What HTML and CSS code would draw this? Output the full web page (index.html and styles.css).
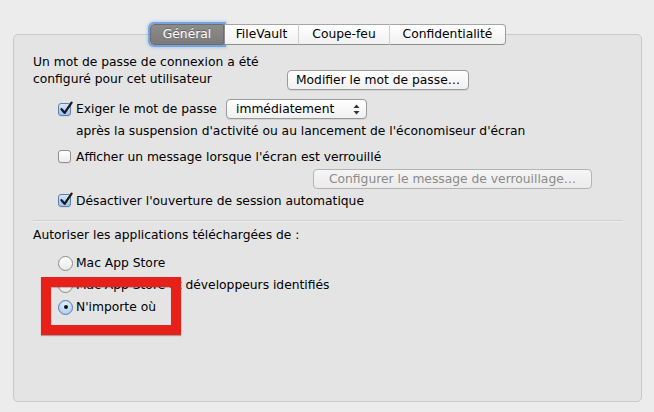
FILE: index.html
```html
<!DOCTYPE html>
<html lang="fr">
<head>
<meta charset="utf-8">
<title>Sécurité et confidentialité</title>
<link rel="stylesheet" href="styles.css">
</head>
<body>
<div class="window">
  <div class="tabs">
    <div class="tab tab-general selected">Général</div>
    <div class="tab tab-filevault">FileVault</div>
    <div class="tab tab-coupefeu">Coupe-feu</div>
    <div class="tab tab-confid">Confidentialité</div>
  </div>
  <div class="panel">
    <div class="row-password">
      <div class="pw-text">Un mot de passe de connexion a été<br>configuré pour cet utilisateur</div>
      <div class="button btn-modify">Modifier le mot de passe…</div>
    </div>
    <div class="row-require">
      <span class="checkbox checked"><svg viewBox="0 0 16 16" width="16" height="16"><path d="M3.5 8.2 L6.6 11.8 L13.6 1.6" fill="none" stroke="#1a1a1a" stroke-width="2.3" stroke-linecap="round" stroke-linejoin="round"/></svg></span>
      <span class="label">Exiger le mot de passe</span>
      <div class="select">immédiatement<svg class="arrows" viewBox="0 0 7 11" width="7" height="11"><path d="M3.5 0.5 L6.5 4 H0.5Z M3.5 10.5 L6.5 7 H0.5Z" fill="#333"/></svg></div>
    </div>
    <div class="row-after">après la suspension d'activité ou au lancement de l'économiseur d'écran</div>
    <div class="row-check row-afficher">
      <span class="checkbox"></span>
      <span class="label">Afficher un message lorsque l'écran est verrouillé</span>
    </div>
    <div class="row-config">
      <div class="button disabled btn-config">Configurer le message de verrouillage…</div>
    </div>
    <div class="row-check row-desactiver">
      <span class="checkbox checked"><svg viewBox="0 0 16 16" width="16" height="16"><path d="M3.5 8.2 L6.6 11.8 L13.6 1.6" fill="none" stroke="#1a1a1a" stroke-width="2.3" stroke-linecap="round" stroke-linejoin="round"/></svg></span>
      <span class="label">Désactiver l'ouverture de session automatique</span>
    </div>
    <div class="separator"></div>
    <div class="row-allow">Autoriser les applications téléchargées de :</div>
    <div class="radios">
      <div class="radio-row"><span class="radio"></span><span class="label">Mac App Store</span></div>
      <div class="radio-row"><span class="radio"></span><span class="label">Mac App Store et développeurs identifiés</span></div>
      <div class="radio-row"><span class="radio on"></span><span class="label">N'importe où</span></div>
    </div>
  </div>
  <div class="highlight"></div>
</div>
</body>
</html>
```

FILE: styles.css
```css
* { box-sizing: border-box; }
html, body { margin: 0; padding: 0; }
body {
  background: #ececec;
  font-family: "DejaVu Sans", "Liberation Sans", sans-serif;
  font-size: 12.3px;
  color: #000;
  width: 654px;
  height: 412px;
  overflow: hidden;
}
.window {
  position: relative;
  padding: 24px 12px 0 13px;
}
.tabs {
  position: relative;
  z-index: 1;
  display: flex;
  justify-content: center;
  height: 21px;
  margin-bottom: -11px;
  padding-left: 1px;
}
.tab {
  height: 21px;
  line-height: 19px;
  text-align: center;
  background: linear-gradient(#ffffff, #f1f1f1);
  border-top: 1px solid #a5a5a5;
  border-bottom: 1px solid #8e8e8e;
  border-left: 1px solid #d0d0d0;
}
.tab-general { width: 74px; }
.tab-filevault { width: 74px; }
.tab-coupefeu { width: 91px; }
.tab-confid {
  width: 117px;
  border-right: 1px solid #9a9a9a;
  border-radius: 0 4px 4px 0;
}
.tab.selected {
  color: #fff;
  background: linear-gradient(#8c8c8c, #7a7a7a);
  border: 1px solid #6d6d6d;
  border-radius: 4px 0 0 4px;
  box-shadow: 0 0 0 2px rgba(96, 150, 220, 0.75), 0 0 3px 3px rgba(120, 170, 230, 0.45);
  text-shadow: 0 -1px 0 rgba(0,0,0,0.3);
}
.tab.selected + .tab { border-left-color: #8e8e8e; }
.panel {
  height: 368px;
  background: #e4e4e4;
  border: 1px solid #c9c9c9;
  border-radius: 5px;
  padding: 19px 19px 0 19px;
}
.row-password {
  display: flex;
  align-items: flex-end;
}
.pw-text {
  width: 254px;
  line-height: 17px;
}
.button {
  height: 20px;
  line-height: 18px;
  padding: 0;
  text-align: center;
  border: 1px solid #9a9a9a;
  border-radius: 4px;
  background: linear-gradient(#ffffff, #f0f0f0);
  box-shadow: 0 1px 0 rgba(0,0,0,0.08);
  white-space: nowrap;
}
.btn-modify {
  width: 182px;
  margin-bottom: -2px;
}
.row-require {
  display: flex;
  align-items: center;
  height: 20px;
  margin-top: 11px;
  padding-left: 25px;
}
.checkbox {
  position: relative;
  width: 13px;
  height: 13px;
  flex: none;
  border: 1px solid #8f8f8f;
  border-radius: 3px;
  background: linear-gradient(#ffffff, #ececec);
  box-shadow: 0 1px 0 rgba(0,0,0,0.05);
  margin-right: 5px;
}
.checkbox.checked {
  border-color: #5d7ea8;
  background: linear-gradient(#d3e6fb, #9cc3ef);
}
.checkbox svg {
  position: absolute;
  left: -1px;
  top: -3px;
}
.row-require .label { width: 150px; }
.select {
  position: relative;
  width: 141px;
  height: 20px;
  line-height: 18px;
  padding-left: 9px;
  border: 1px solid #9a9a9a;
  border-radius: 4px;
  background: linear-gradient(#ffffff, #f0f0f0);
  box-shadow: 0 1px 0 rgba(0,0,0,0.08);
}
.select .arrows {
  position: absolute;
  right: 6px;
  top: 4px;
}
.row-after {
  margin-top: 4px;
  line-height: 17px;
  padding-left: 43px;
}
.row-check {
  display: flex;
  align-items: center;
  height: 17px;
  padding-left: 25px;
}
.row-afficher { margin-top: 8px; }
.row-config {
  display: flex;
  margin-top: 4px;
  padding-left: 280px;
}
.button.disabled {
  color: #8a8a8a;
  border-color: #b5b5b5;
  background: linear-gradient(#f5f5f5, #ebebeb);
  box-shadow: none;
}
.btn-config { width: 279px; }
.row-desactiver { margin-top: 3px; }
.separator {
  height: 1px;
  margin-top: 11px;
  background: #cfcfcf;
  box-shadow: 0 1px 0 #f0f0f0;
}
.row-allow {
  margin-top: 6px;
  line-height: 17px;
}
.radios {
  margin-top: 8px;
  padding-left: 25px;
}
.radio-row {
  display: flex;
  align-items: center;
  height: 22px;
}
.radio {
  position: relative;
  width: 15px;
  height: 15px;
  flex: none;
  border: 1px solid #8a8a8a;
  border-radius: 50%;
  background: linear-gradient(#ffffff, #e9e9e9);
  margin-right: 3px;
}
.radio.on {
  border-color: #5b7ca6;
  background: radial-gradient(circle at 50% 30%, #e4f0fd, #9fc5ef);
}
.radio.on::after {
  content: "";
  position: absolute;
  left: 4.5px;
  top: 4.5px;
  width: 4px;
  height: 4px;
  border-radius: 50%;
  background: #111;
}
.highlight {
  position: absolute;
  left: 41px;
  top: 277px;
  width: 140px;
  height: 58px;
  border: 10px solid #e8201a;
  box-shadow: 0 1px 1px rgba(0,0,0,0.3), inset 0 1px 1px rgba(0,0,0,0.25);
}
```
